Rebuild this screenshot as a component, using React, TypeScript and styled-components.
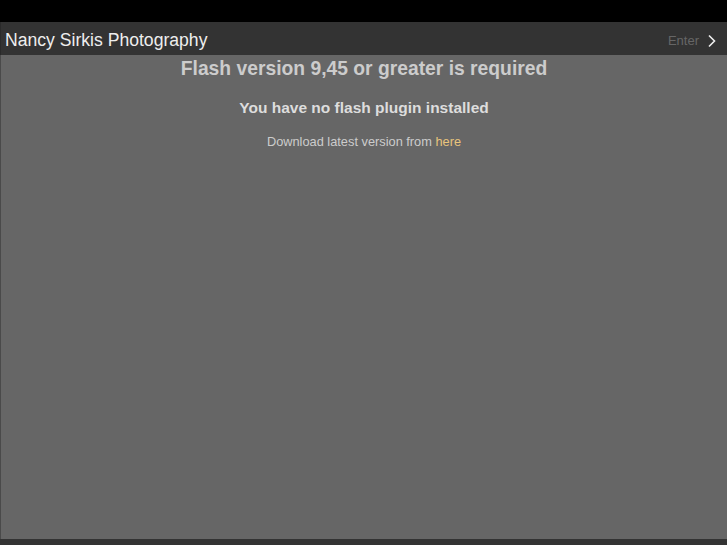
import React from 'react';
import styled, { createGlobalStyle } from 'styled-components';

const GlobalStyle = createGlobalStyle`
  html, body {
    margin: 0;
    padding: 0;
    background: #000;
    height: 100%;
  }
  #root {
    height: 100%;
  }
`;

export default function App() {
  return (
    <>
      <GlobalStyle />
      <PageCss>
        <TopGapCss />
        <HeaderCss>
          <TitleCss>Nancy Sirkis Photography</TitleCss>
          <EnterCss href="#">
            Enter
            <svg width="10" height="14" viewBox="0 0 10 14">
              <path d="M2 1.5 L7.5 7 L2 12.5" fill="none" stroke="#eee" strokeWidth="1.6" />
            </svg>
          </EnterCss>
        </HeaderCss>
        <ContentCss>
          <HeadlineCss>Flash version 9,45 or greater is required</HeadlineCss>
          <SubHeadlineCss>You have no flash plugin installed</SubHeadlineCss>
          <DownloadCss>
            Download latest version from <HereLinkCss href="#">here</HereLinkCss>
          </DownloadCss>
        </ContentCss>
        <FooterCss />
      </PageCss>
    </>
  );
}

const PageCss = styled.div`
  display: flex;
  flex-direction: column;
  height: 545px;
  font-family: 'Liberation Sans', Arial, sans-serif;
`;

const TopGapCss = styled.div`
  height: 22px;
  background: #000;
`;

const HeaderCss = styled.div`
  height: 33px;
  background: #333;
  display: flex;
  align-items: center;
  justify-content: space-between;
  padding: 4px 10px 0 5px;
  box-sizing: border-box;
  border-left: 1px solid #2a2a2a;
`;

const TitleCss = styled.div`
  color: #eee;
  font-size: 17.6px;
  margin-left: -1px;
`;

const EnterCss = styled.a`
  display: flex;
  align-items: center;
  gap: 8px;
  color: #666;
  font-size: 13px;
  text-decoration: none;
`;

const ContentCss = styled.div`
  flex: 1;
  background: #666;
  border-left: 1px solid #4a4a4a;
  display: flex;
  flex-direction: column;
  align-items: center;
  padding-top: 2px;
`;

const HeadlineCss = styled.div`
  color: #ccc;
  font-size: 19.3px;
  font-weight: bold;
  line-height: 24px;
`;

const SubHeadlineCss = styled.div`
  color: #ddd;
  font-size: 15.5px;
  font-weight: bold;
  margin-top: 18px;
  line-height: 18px;
`;

const DownloadCss = styled.div`
  color: #ccc;
  font-size: 12.8px;
  margin-top: 17px;
`;

const HereLinkCss = styled.a`
  color: #e8c47c;
  text-decoration: none;
`;

const FooterCss = styled.div`
  height: 6px;
  background: #333;
`;
